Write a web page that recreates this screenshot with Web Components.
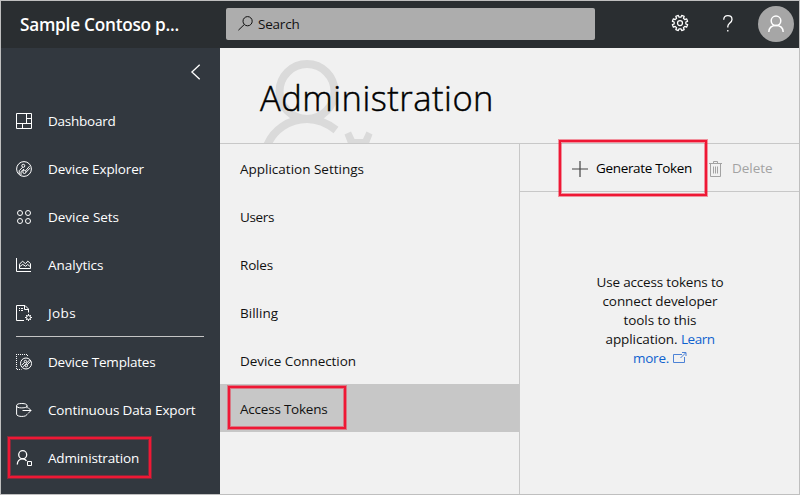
<!DOCTYPE html>
<html lang="en">
<head>
<meta charset="utf-8">
<title>Administration</title>
<style>
html, body { margin: 0; height: 100%; }
body { font: 13.5px/19px "Open Sans", "Noto Sans", sans-serif; overflow: hidden; }
</style>
</head>
<body>
<admin-app></admin-app>
<script>
const make = (name, html, after) => customElements.define(name, class extends HTMLElement {
  connectedCallback() {
    if (this.shadowRoot) return;
    const t = document.createElement('template');
    t.innerHTML = html;
    this.attachShadow({ mode: 'open' }).appendChild(t.content.cloneNode(true));
    if (after) after(this);
  }
});

/* A run of text tracked to an exact advance width. */
make('fit-text', `<style>:host{display:inline-block;white-space:nowrap}</style><span><slot></slot></span>`, el => {
  const s = el.shadowRoot.querySelector('span');
  const diff = Number(el.getAttribute('w')) - s.getBoundingClientRect().width;
  s.style.letterSpacing = diff / el.textContent.length + 'px';
});

/* Eight-toothed gear outline centred in a 16px box. */
const gearPath = () => {
  const pts = [];
  for (let i = 0; i < 8; i++) {
    for (const [off, r] of [[-13, 5.9], [-10, 7.8], [10, 7.8], [13, 5.9]]) {
      const a = (i * 45 + 22.5 + off) * Math.PI / 180;
      pts.push((8 + r * Math.cos(a)).toFixed(2) + ' ' + (8 + r * Math.sin(a)).toFixed(2));
    }
  }
  return 'M' + pts.join('L') + 'z';
};

const icons = {
  dashboard: '<path d="M.5.5h15v15H.5zM10.5.5v10M.5 10.5h15M10.5 5.5h5M6.5 10.5v5"/>',
  explorer: '<circle cx="8" cy="8" r="7.4"/><circle cx="7.3" cy="4.8" r="1.5"/><circle cx="8.4" cy="10.9" r="1.6"/><path d="M6.7 6.2 3.2 9.7v3.5M5 14.1v-3.5l3-2.5M9.6 9.8l3.9-4.6M10 11.3l4-4.2"/>',
  sets: '<circle cx="4" cy="4" r="2.5"/><circle cx="12" cy="4" r="2.5"/><circle cx="4" cy="12" r="2.5"/><circle cx="12" cy="12" r="2.5"/>',
  analytics: '<path d="M.5 1v13.5H15"/><path d="M3.5 11.5V7.2l3-3 3 2.5 2.3-2.6 2.7 2.5v4.9zM3.5 9.8l3.2-2.4 3 1.9 2-1.8 2.8 2.3"/>',
  jobs: '<path d="M8 15.5H.5V.5H9l3.5 3.5v3.5M8.5.5v4h4M3 3.5h1M5 3.5h2M3 5.5h1M5 5.5h2"/><circle cx="12.5" cy="12.5" r="2"/><path d="M12.5 9v1.3M12.5 14.7V16M9 12.5h1.3M14.7 12.5H16M10 10l.9.9M14.1 14.1l.9.9M15 10l-.9.9M10 15l.9-.9"/>',
  templates: '<path stroke-dasharray="1 1" d="M0 .5h12M.5 0v15.5h5M11.5 1v2"/><circle cx="10" cy="9.5" r="5.5"/><circle cx="9.4" cy="7.5" r="1.2"/><circle cx="10.3" cy="11.7" r="1.2"/><path d="M8.6 8.4 5.9 11M11.2 10.8l3.4-3.6M6.8 13l3-3 1.3-1.2L13.6 6"/>',
  export: '<ellipse cx="5.8" cy="3.7" rx="5.2" ry="2.2"/><path d="M.6 3.7v8.500c0 3 10.4 3 10.4 0M11 3.700v2.600M6.500 8.500h8.500M12 5.500l3 3-3 3"/>',
  admin: '<circle cx="6.7" cy="4.700" r="4" stroke-width="1.3"/><path stroke-width="1.3" d="M1.300 14.500c0-3.500 2.200-5.700 5.200-5.700 2 0 3.300.8 4 2"/><path d="M11.500 11.500h4v4h-4z"/>',
  search: '<circle cx="9.600" cy="5.200" r="4.600"/><path d="M6.300 8.500.4 14.200"/>',
  chevron: '<path d="M8.700.7.9 8l7.800 7.300"/>',
  gear: `<path stroke-linejoin="round" d="${gearPath()}"/><circle cx="8" cy="8" r="2.500"/>`,
  help: '<path d="M.7 4.800C.8 2 2.400.7 4.800.7S9 2.100 9 4.400c0 3.300-4.200 3.900-4.200 7v1.100M4.800 15v1.600"/>',
  user: '<circle cx="8" cy="5.800" r="4.800"/><path d="M.8 17c.2-4 3-6.400 7.200-6.400s7 2.400 7.200 6.400"/>',
  plus: '<path d="M8 0v16M0 8h16"/>',
  bin: '<path d="M0 2.500h13M4.500 2.500v-2h4v2M1.500 2.500v13h10v-13M4.500 5.500v7M6.500 5.500v7M8.500 5.500v7"/>',
  open: '<path d="M9 2.500H.5v8h11V5M7.500 6l5-5M9 .5h4v3.500"/>'
};
make('ui-icon', `<style>:host{display:block;flex:none}svg{display:block;fill:none;stroke:currentColor;overflow:visible}</style><svg></svg>`, el => {
  const s = el.shadowRoot.querySelector('svg');
  const [w, h] = (el.getAttribute('size') || '16 16').split(' ');
  s.setAttribute('width', w); s.setAttribute('height', h);
  s.setAttribute('stroke-width', el.getAttribute('stroke') || 1);
  s.innerHTML = icons[el.getAttribute('name')];
});

/* Red callout frame laid over a control. */
make('call-out', `<style>:host{position:absolute;box-sizing:border-box;border:2px solid #ef1835;box-shadow:0 0 0 1px #ef183570,inset 0 0 0 1px #ef183570;pointer-events:none}</style>`);

make('top-bar', `<style>
:host{display:grid;grid-template-columns:225px 369px 1fr;height:47px;background:#2a2e31;color:#fff}
.brand{padding:11px 0 0 19px;font:600 17.2px/26px "Open Sans",sans-serif}
.search{display:flex;gap:5px;height:32px;margin-top:7px;box-sizing:border-box;padding:7px 0 0 12px;background:#adadad;border-radius:2px;color:#111}
.search ui-icon{margin-top:1px}
.tools{display:flex;justify-content:flex-end;padding:5px 5px 0 0}
.tools ui-icon{margin-top:9px}
.help{margin:0 25px 0 35px}
.avatar{width:36px;height:36px;border-radius:50%;background:#a6a6a6;display:flex;justify-content:center}
</style>
<div class="brand"><fit-text w="159">Sample Contoso p...</fit-text></div>
<div class="search"><ui-icon name="search" size="15 15"></ui-icon><fit-text w="41.500">Search</fit-text></div>
<div class="tools"><ui-icon name="gear" stroke="1.25"></ui-icon><ui-icon class="help" name="help" size="10 17" stroke="1.3"></ui-icon><div class="avatar"><ui-icon name="user" size="16 17" stroke="1.5"></ui-icon></div></div>`);

make('nav-item', `<style>:host{display:flex;align-items:center;gap:16px;height:48px;padding-left:15px;position:relative}</style><ui-icon></ui-icon><slot></slot><slot name="mark"></slot>`, el => {
  const old = el.shadowRoot.querySelector('ui-icon'), n = document.createElement('ui-icon');
  n.setAttribute('name', el.getAttribute('icon'));
  old.replaceWith(n);
});

make('side-nav', `<style>
:host{display:block;background:#32383f;color:#fff}
.top{height:49px;display:flex;justify-content:flex-end;box-sizing:border-box;padding:16px 20px 0 0}
hr{border:0;height:1px;background:#c5c5c5;margin:0 16px 0 15px}
.first{height:240px;margin-bottom:-1px}
.last{margin-top:1px}
fit-text{position:relative}
call-out{left:7px;top:3px;width:143px;height:41px}
</style>
<div class="top"><ui-icon name="chevron" size="9 16" stroke="1.3"></ui-icon></div>
<div class="first">
<nav-item icon="dashboard"><fit-text w="67.5">Dashboard</fit-text></nav-item>
<nav-item icon="explorer"><fit-text w="96">Device Explorer</fit-text></nav-item>
<nav-item icon="sets"><fit-text w="71">Device Sets</fit-text></nav-item>
<nav-item icon="analytics"><fit-text w="55.5">Analytics</fit-text></nav-item>
<nav-item icon="jobs"><fit-text w="28">Jobs</fit-text></nav-item>
</div><hr><div class="last">
<nav-item icon="templates"><fit-text w="107.5">Device Templates</fit-text></nav-item>
<nav-item icon="export"><fit-text w="147.5">Continuous Data Export</fit-text></nav-item>
<nav-item icon="admin"><fit-text w="91">Administration</fit-text><call-out slot="mark"></call-out></nav-item>
</div>`);

make('page-head', `<style>
:host{display:block;position:relative;height:95px;border-bottom:1px solid #c8c8c8;overflow:hidden}
svg{position:absolute;left:0;top:0;fill:none;stroke:#dadada;stroke-width:8}
h1{position:relative;margin:0;padding:25px 0 0 40px;font:300 34.5px/50px "Open Sans",sans-serif;color:#000;-webkit-text-stroke:.45px #000}
</style>
<svg width="220" height="95"><circle cx="87" cy="43.5" r="27.5"/><path d="M47 98c6-16 22-27 40-27 11 0 20 4 29 11"/><path fill="#dadada" stroke="none" d="m124.500 86.500 6.500-3 3.500 7.500h8.500l3.500-7.500 6 3-3.500 9h-21z"/></svg>
<h1><fit-text w="234">Administration</fit-text></h1>`);

make('menu-item', `<style>:host{display:flex;align-items:center;position:relative;height:48px;padding:2px 0 0 20px;box-sizing:border-box}:host([selected]){background:#c7c7c7}</style><slot></slot>`);
make('settings-menu', `<style>
:host{display:block;border-right:1px solid #c8c8c8}
call-out{left:8px;top:2px;width:118px;height:43px}
</style>
<menu-item><fit-text w="124">Application Settings</fit-text></menu-item>
<menu-item><fit-text w="34">Users</fit-text></menu-item>
<menu-item><fit-text w="33">Roles</fit-text></menu-item>
<menu-item><fit-text w="38">Billing</fit-text></menu-item>
<menu-item><fit-text w="116">Device Connection</fit-text></menu-item>
<menu-item selected><fit-text w="87.5">Access Tokens</fit-text><call-out></call-out></menu-item>`);

make('token-panel', `<style>
:host{display:block}
.bar{position:relative;display:flex;align-items:center;height:47px;border-bottom:1px solid #c8c8c8;padding-left:52px;color:#000}
.bar fit-text{margin:1px 0 0 8px}
.bar ui-icon{margin-top:2px}
.plus{color:#444}
.off{display:flex;align-items:center;color:#a3a3a3;margin-left:17px}
.off fit-text{margin-left:10px}
call-out{left:39px;top:-4px;width:148px;height:56px}
p{margin:81px 0 0;padding-left:1px;text-align:center;color:#111}
div.row{height:19px;display:flex;justify-content:center}
a{color:#0f62cf}
.row ui-icon{margin:3px 0 0 4px;color:#4c82d6}
</style>
<div class="bar"><ui-icon class="plus" name="plus" stroke="1.2"></ui-icon><fit-text w="96">Generate Token</fit-text>
<span class="off"><ui-icon name="bin" size="13 16"></ui-icon><fit-text w="40.500">Delete</fit-text></span><call-out></call-out></div>
<p><fit-text w="127">Use access tokens to</fit-text><br><fit-text w="115">connect developer</fit-text><br><fit-text w="73">tools to this</fit-text><br><fit-text w="72">application.</fit-text><a>&nbsp;<fit-text w="33.500">Learn</fit-text></a></p>
<div class="row"><a><fit-text w="36">more.</fit-text></a><ui-icon name="open" size="13 11"></ui-icon></div>`);

make('admin-app', `<style>
:host{display:grid;grid-template:47px 1fr/219px 1fr;width:800px;height:495px;box-sizing:border-box;border:1px solid #bfbfbf;background:#f1f1f1;color:#111;overflow:hidden}
top-bar{grid-column:1/-1}
main{display:grid;grid-template:96px 1fr/300px 1fr}
page-head{grid-column:1/-1}
</style>
<top-bar></top-bar><side-nav></side-nav>
<main><page-head></page-head><settings-menu></settings-menu><token-panel></token-panel></main>`);
</script>
</body>
</html>
